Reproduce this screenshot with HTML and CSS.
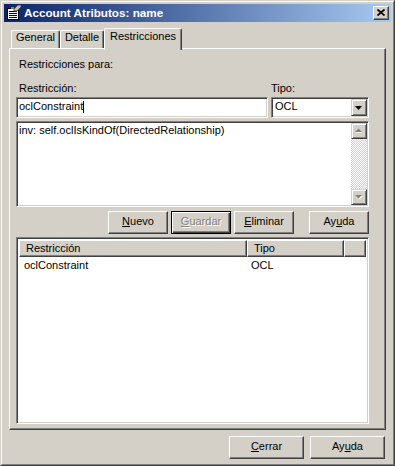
FILE: index.html
```html
<!DOCTYPE html>
<html lang="es">
<head>
<meta charset="utf-8">
<title>Account Atributos: name</title>
<link rel="stylesheet" href="styles.css">
</head>
<body>
<div class="window">
  <div class="window-inner">
    <div class="titlebar">
      <svg class="title-icon" width="16" height="16" viewBox="0 0 16 16">
        <rect x="1.5" y="3.5" width="11" height="11" fill="#fff" stroke="#000"/>
        <rect x="3" y="6" width="8" height="1" fill="#000"/>
        <rect x="3" y="8" width="8" height="1" fill="#000"/>
        <rect x="3" y="10" width="8" height="1" fill="#000"/>
        <rect x="3" y="12" width="8" height="1" fill="#000"/>
        <polygon points="8,4 12,0 15,0 15,2 11,6 8,6" fill="#c0c0c0" stroke="#404040" stroke-width="0.8"/>
        <rect x="5" y="2" width="3" height="2" fill="#808080"/>
      </svg>
      <span class="title-text">Account Atributos: name</span>
      <div class="close-btn">
        <svg width="8" height="7" viewBox="0 0 8 7">
          <path d="M0.5 0.5 L7.5 6.5 M7.5 0.5 L0.5 6.5" stroke="#000" stroke-width="1.7" fill="none"/>
        </svg>
      </div>
    </div>

    <div class="dialog-body">
      <div class="tabs">
        <div class="tab tab-general">General</div>
        <div class="tab tab-detalle">Detalle</div>
        <div class="tab tab-active">Restricciones</div>
      </div>

      <div class="panel">
        <div class="group-label">Restricciones para:</div>

        <div class="field-row">
          <div class="field field-name">
            <div class="field-label">Restricción:</div>
            <div class="input"><span>oclConstraint</span><span class="caret"></span></div>
          </div>
          <div class="field field-type">
            <div class="field-label">Tipo:</div>
            <div class="input select">
              <span class="select-value">OCL</span>
              <div class="dd-btn">
                <svg width="7" height="4" viewBox="0 0 7 4"><polygon points="0,0 7,0 3.5,4" fill="#000"/></svg>
              </div>
            </div>
          </div>
        </div>

        <div class="input textarea">
          <div class="ta-text">inv: self.oclIsKindOf(DirectedRelationship)</div>
          <div class="scrollbar">
            <div class="sb-btn">
              <svg width="9" height="6" viewBox="0 0 9 6">
                <polygon points="1,5 4,2 7,5" fill="#fff"/>
                <polygon points="0,4 3.5,0.5 7,4" fill="#808080"/>
              </svg>
            </div>
            <div class="sb-track"></div>
            <div class="sb-btn">
              <svg width="9" height="6" viewBox="0 0 9 6">
                <polygon points="1,2 8,2 4.5,5.5" fill="#fff"/>
                <polygon points="0,1 7,1 3.5,4.5" fill="#808080"/>
              </svg>
            </div>
          </div>
        </div>

        <div class="btn-row">
          <div class="btn"><span><u>N</u>uevo</span></div>
          <div class="btn btn-default btn-disabled"><span><u>G</u>uardar</span></div>
          <div class="btn"><span><u>E</u>liminar</span></div>
          <div class="btn btn-help"><span>Ay<u>u</u>da</span></div>
        </div>

        <div class="input listview">
          <div class="lv-header">
            <div class="lv-col lv-col-name">Restricción</div>
            <div class="lv-col lv-col-type">Tipo</div>
            <div class="lv-col lv-col-fill"></div>
          </div>
          <div class="lv-row">
            <div class="lv-cell lv-cell-name">oclConstraint</div>
            <div class="lv-cell lv-cell-type">OCL</div>
          </div>
        </div>
      </div>

      <div class="footer">
        <div class="btn btn-wide"><span><u>C</u>errar</span></div>
        <div class="btn btn-wide"><span>Ay<u>u</u>da</span></div>
      </div>
    </div>
  </div>
</div>
</body>
</html>
```

FILE: styles.css
```css
* {
  box-sizing: border-box;
}

html,
body {
  margin: 0;
  padding: 0;
}

body {
  width: 395px;
  height: 466px;
  overflow: hidden;
  background: #d4d0c8;
  font-family: "Liberation Sans", Arial, sans-serif;
  font-size: 11px;
  line-height: 13px;
  color: #000;
}

.window {
  width: 395px;
  height: 466px;
  background: #d4d0c8;
  border: 1px solid;
  border-color: #d4d0c8 #404040 #404040 #d4d0c8;
}

.window-inner {
  height: 100%;
  border: 1px solid;
  border-color: #fff #808080 #808080 #fff;
  padding: 2px;
  display: flex;
  flex-direction: column;
}

/* Title bar */
.titlebar {
  flex: none;
  height: 18px;
  display: flex;
  align-items: center;
  padding: 0 2px;
  background: linear-gradient(to right, #0a246a 0%, #a6caf0 100%);
}

.title-icon {
  flex: none;
  margin-right: 2px;
}

.title-text {
  flex: 1;
  color: #fff;
  font-weight: bold;
  font-size: 11.7px;
  line-height: 18px;
  white-space: nowrap;
}

.close-btn {
  flex: none;
  width: 16px;
  height: 14px;
  background: #d4d0c8;
  border: 1px solid;
  border-color: #fff #404040 #404040 #fff;
  box-shadow: inset -1px -1px 0 #808080;
  display: flex;
  align-items: center;
  justify-content: center;
  padding: 0 1px 1px 0;
}

.close-btn svg {
  display: block;
}

/* Body */
.dialog-body {
  flex: 1;
  display: flex;
  flex-direction: column;
  padding: 6px 5px 0 5px;
}

.tabs {
  flex: none;
  height: 20px;
  display: flex;
  align-items: flex-end;
  padding-left: 2px;
  position: relative;
  z-index: 1;
}

.tab {
  height: 18px;
  background: #d4d0c8;
  border-top: 1px solid #fff;
  border-left: 1px solid #fff;
  border-right: 1px solid #404040;
  box-shadow: inset -1px 0 0 #808080;
  border-radius: 2px 2px 0 0;
  text-align: center;
  white-space: nowrap;
  line-height: 13px;
}

.tab-general {
  width: 49px;
}

.tab-detalle {
  width: 44px;
}

.tab-active {
  width: 78px;
  height: 22px;
  margin-bottom: -2px;
  padding-top: 1px;
}

.panel {
  flex: none;
  height: 382px;
  border-top: 1px solid #fff;
  border-left: 1px solid #fff;
  border-right: 1px solid #404040;
  border-bottom: 1px solid #404040;
  box-shadow: inset -1px -1px 0 #808080;
  padding: 9px 16px 5px 6px;
  display: flex;
  flex-direction: column;
}

.group-label {
  padding-left: 3px;
  height: 13px;
}

.field-row {
  margin-top: 11px;
  display: flex;
}

.field-name {
  width: 252px;
}

.field-type {
  width: 98px;
  margin-left: 3px;
}

.field-label {
  height: 13px;
  margin-bottom: 2px;
  padding-left: 3px;
}

.field-type .field-label {
  padding-left: 0;
}

/* Sunken control */
.input {
  background: #fff;
  border: 1px solid;
  border-color: #808080 #fff #fff #808080;
  box-shadow: inset 1px 1px 0 #404040, inset -1px -1px 0 #d4d0c8;
  height: 21px;
  padding: 1px 2px 0 2px;
  line-height: 15px;
  display: flex;
  align-items: flex-start;
  white-space: nowrap;
}

.caret {
  display: inline-block;
  width: 1px;
  height: 12px;
  margin-top: 2px;
  background: #000;
}

.select {
  padding-right: 1px;
}

.select-value {
  flex: 1;
  padding-left: 1px;
}

.dd-btn {
  flex: none;
  width: 16px;
  height: 17px;
  background: #d4d0c8;
  border: 1px solid;
  border-color: #d4d0c8 #404040 #404040 #d4d0c8;
  box-shadow: inset 1px 1px 0 #fff, inset -1px -1px 0 #808080;
  display: flex;
  align-items: center;
  justify-content: center;
  padding-right: 1px;
}

.dd-btn svg,
.sb-btn svg {
  display: block;
}

.textarea {
  margin-top: 3px;
  height: 86px;
  padding: 1px 1px 1px 2px;
  align-items: stretch;
}

.ta-text {
  flex: 1;
  line-height: 13px;
  padding-top: 1px;
}

.scrollbar {
  flex: none;
  width: 16px;
  display: flex;
  flex-direction: column;
}

.sb-btn {
  flex: none;
  height: 16px;
  background: #d4d0c8;
  border: 1px solid;
  border-color: #d4d0c8 #404040 #404040 #d4d0c8;
  box-shadow: inset 1px 1px 0 #fff, inset -1px -1px 0 #808080;
  display: flex;
  align-items: center;
  justify-content: center;
}

.sb-track {
  flex: 1;
  background-color: #fff;
  background-image: repeating-conic-gradient(#d4d0c8 0 25%, #fff 0 50%);
  background-size: 2px 2px;
}

/* Buttons */
.btn-row {
  margin-top: 4px;
  display: flex;
  justify-content: flex-end;
  gap: 3px;
}

.btn {
  width: 60px;
  height: 23px;
  background: #d4d0c8;
  border: 1px solid;
  border-color: #fff #404040 #404040 #fff;
  box-shadow: inset -1px -1px 0 #808080;
  display: flex;
  align-items: center;
  justify-content: center;
  padding-bottom: 2px;
  white-space: nowrap;
  line-height: 13px;
}

.btn-help {
  margin-left: 12px;
}

.btn-default {
  border-color: #000;
  box-shadow: inset 1px 1px 0 #fff, inset -1px -1px 0 #404040, inset -2px -2px 0 #808080;
}

.btn-disabled {
  color: #808080;
  text-shadow: 1px 1px 0 #fff;
}

.btn-wide {
  width: 75px;
}

/* List view */
.listview {
  margin-top: 3px;
  height: 187px;
  padding: 2px 2px;
  flex-direction: column;
  align-items: stretch;
  line-height: 13px;
}

.lv-header {
  display: flex;
  height: 17px;
  flex: none;
}

.lv-col {
  background: #d4d0c8;
  border: 1px solid;
  border-color: #fff #404040 #404040 #fff;
  box-shadow: inset -1px -1px 0 #808080;
  line-height: 14px;
  white-space: nowrap;
}

.lv-col-name {
  width: 228px;
  padding-left: 6px;
}

.lv-col-type {
  width: 97px;
  padding-left: 6px;
}

.lv-col-fill {
  flex: 1;
}

.lv-row {
  display: flex;
  height: 17px;
  line-height: 17px;
}

.lv-cell-name {
  width: 228px;
  padding-left: 5px;
}

.lv-cell-type {
  padding-left: 4px;
}

/* Footer */
.footer {
  margin-top: 6px;
  display: flex;
  justify-content: flex-end;
  gap: 6px;
  padding-right: 1px;
}
```
